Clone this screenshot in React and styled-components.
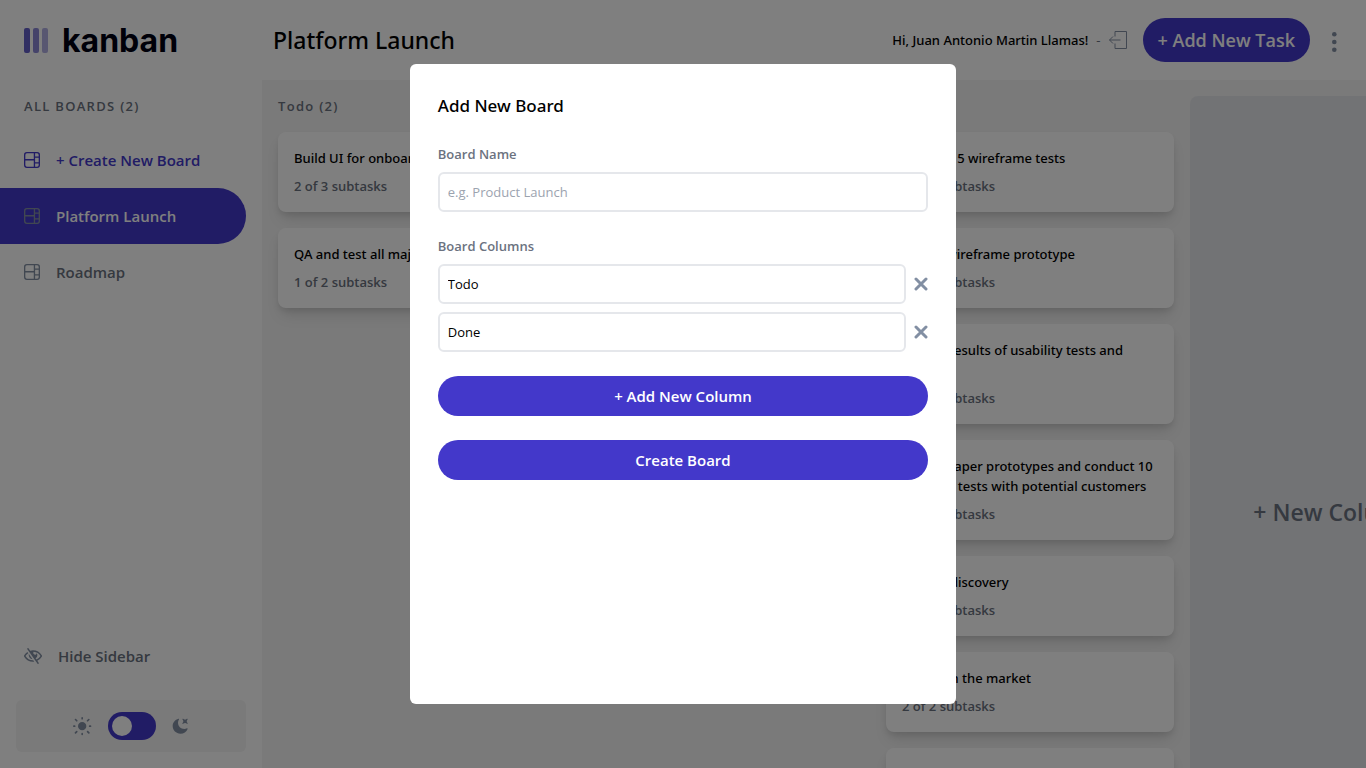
import React from "react";
import styled, { createGlobalStyle, css } from "styled-components";

const GlobalStyle = createGlobalStyle`
  *, *::before, *::after { box-sizing: border-box; }
  body {
    margin: 0;
    overflow: hidden;
    background: #ffffff;
    color: #000000;
    font-family: "Open Sans", "Noto Sans", sans-serif;
    font-size: 15px;
    font-weight: 600;
  }
  h1, h2, h3, p, ul { margin: 0; padding: 0; font-size: inherit; font-weight: inherit; }
  ul { list-style: none; }
  button, input { font: inherit; color: inherit; }
  button { border: 0; background: none; padding: 0; cursor: pointer; }
  svg { display: block; flex: none; }
`;

const gray = "#6b7280";
const slate = "#828fa3";
const indigo = "#4338ca";
const canvas = "#f4f4f4";

const mediumText = css`
  font-family: "Noto Sans", sans-serif;
  font-weight: 500;
`;

const Page = styled.div`
  display: flex;
  height: 100vh;
  overflow: hidden;
`;

const Sidebar = styled.aside`
  display: flex;
  flex-direction: column;
  flex: none;
  width: 262px;
  padding-bottom: 16px;
`;

const Brand = styled.div`
  display: flex;
  align-items: center;
  gap: 14px;
  height: 80px;
  padding-left: 24px;
  font-family: Inter, sans-serif;
  font-size: 32px;
  font-weight: 700;
  color: #000112;
`;

const SectionLabel = styled.h2`
  padding: 16px 24px;
  font-size: 13px;
  line-height: 20px;
  letter-spacing: 0.1em;
  color: ${gray};
`;

const NavItem = styled.button`
  display: flex;
  align-items: center;
  gap: 16px;
  width: 246px;
  height: 56px;
  padding-left: 24px;
  border-radius: 0 28px 28px 0;
  background: ${(p) => (p.$active ? indigo : "transparent")};
  color: ${(p) => (p.$active ? "#ffffff" : p.$accent ? indigo : gray)};
  svg { color: ${(p) => (p.$accent ? indigo : slate)}; }
`;

const Spacer = styled.div`
  flex: 1;
`;

const ThemePanel = styled.div`
  display: flex;
  align-items: center;
  justify-content: center;
  gap: 16px;
  height: 52px;
  margin: 16px 16px 0;
  border-radius: 6px;
  background: ${canvas};
  color: ${slate};
`;

const Toggle = styled.input`
  appearance: none;
  display: flex;
  align-items: center;
  width: 48px;
  height: 28px;
  margin: 0;
  padding: 4px;
  border-radius: 14px;
  background: ${indigo};
  &::before {
    content: "";
    width: 20px;
    height: 20px;
    border-radius: 50%;
    background: #ffffff;
  }
`;

const Main = styled.div`
  display: flex;
  flex-direction: column;
  flex: 1;
  min-width: 0;
`;

const Header = styled.header`
  display: flex;
  align-items: center;
  flex: none;
  height: 80px;
  padding: 0 29px 0 11px;
`;

const BoardTitle = styled.h1`
  ${mediumText}
  flex: 1;
  font-size: 23px;
  line-height: 32px;
`;

const Greeting = styled.p`
  ${mediumText}
  font-size: 13px;
  line-height: 20px;
`;

const Dash = styled.span`
  margin: 0 8px;
  font-weight: 400;
  color: ${gray};
`;

const IconButton = styled.button`
  display: flex;
  align-items: center;
  justify-content: center;
  color: ${slate};
`;

const MenuButton = styled(IconButton)`
  padding-top: 4px;
`;

const AddTask = styled.button`
  height: 44px;
  margin: 0 22px 0 16px;
  padding: 0 15px;
  border-radius: 22px;
  background: ${indigo};
  color: #ffffff;
  font-size: 18px;
`;

const Board = styled.main`
  display: flex;
  align-items: flex-start;
  flex: 1;
  min-height: 0;
  overflow: hidden;
  background: ${canvas};
`;

const Columns = styled.div`
  display: flex;
  gap: 16px;
  padding: 16px;
`;

const Column = styled.section`
  flex: none;
  width: 288px;
  padding-bottom: 100px;
`;

const ColumnTitle = styled.h2`
  margin-bottom: 16px;
  font-size: 13px;
  line-height: 20px;
  letter-spacing: 0.1em;
  color: ${gray};
`;

const CardList = styled.ul`
  display: flex;
  flex-direction: column;
  gap: 16px;
`;

const Card = styled.li`
  display: flex;
  flex-direction: column;
  gap: 8px;
  padding: 16px;
  border-radius: 8px;
  background: #ffffff;
  box-shadow: 0 4px 6px -1px rgba(0, 0, 0, 0.1), 0 10px 15px -3px rgba(0, 0, 0, 0.1);
  font-size: 13px;
  line-height: 20px;
  p { color: ${gray}; }
`;

const TaskTitle = styled.h3`
  ${mediumText}
`;

const NewColumn = styled.button`
  flex: none;
  width: 288px;
  border-radius: 8px;
  background: #e5e7eb;
  color: ${gray};
  font-size: 23px;
`;

const Overlay = styled.div`
  position: fixed;
  inset: 0;
  display: flex;
  justify-content: center;
  padding: 64px 0;
  background: rgba(0, 0, 0, 0.5);
`;

const Modal = styled.form`
  display: flex;
  flex-direction: column;
  gap: 24px;
  width: 40%;
  padding: 28px;
  border-radius: 6px;
  background: #ffffff;
`;

const ModalTitle = styled.h2`
  ${mediumText}
  font-size: 17px;
  line-height: 28px;
`;

const Field = styled.div`
  display: flex;
  flex-direction: column;
  gap: 8px;
`;

const Label = styled.label`
  font-size: 13px;
  line-height: 20px;
  color: ${gray};
`;

const InputRow = styled.div`
  display: flex;
  align-items: center;
  gap: 8px;
`;

const TextInput = styled.input`
  flex: 1;
  width: 100%;
  min-width: 0;
  min-height: 40px;
  padding: 0 8px;
  border: 2px solid #e5e7eb;
  border-radius: 6px;
  background: #ffffff;
  font-size: 13px;
  font-weight: 400;
  &::placeholder { color: #9ca3af; opacity: 1; }
`;

const PillButton = styled.button`
  height: 40px;
  border-radius: 20px;
  background: ${indigo};
  color: #ffffff;
`;

const LogoMark = () => (
  <svg width="24" height="25" viewBox="0 0 24 25" fill="#635fc7" aria-hidden="true">
    <rect width="6" height="25" rx="2" />
    <rect x="9" width="6" height="25" rx="2" opacity="0.75" />
    <rect x="18" width="6" height="25" rx="2" opacity="0.5" />
  </svg>
);

const BoardIcon = () => (
  <svg width="16" height="16" viewBox="0 0 16 16" fill="currentColor" aria-hidden="true">
    <path d="M0 2.889A2.889 2.889 0 0 1 2.889 0H13.11A2.889 2.889 0 0 1 16 2.889V13.11A2.888 2.888 0 0 1 13.111 16H2.89A2.889 2.889 0 0 1 0 13.111V2.89Zm1.333 5.555v4.667c0 .859.697 1.556 1.556 1.556h6.889V8.444H1.333Zm8.445-1.333V1.333h-6.89A1.556 1.556 0 0 0 1.334 2.89V7.11h8.445Zm4.889-1.333H11.11v4.444h3.556V5.778Zm0 5.778H11.11v3.11h2a1.556 1.556 0 0 0 1.556-1.555v-1.555Zm0-7.112V2.89a1.555 1.555 0 0 0-1.556-1.556h-2v3.111h3.556Z" />
  </svg>
);

const HideIcon = () => (
  <svg width="18" height="16" viewBox="0 0 18 16" fill="currentColor" aria-hidden="true">
    <path d="M8.522 11.223a4.252 4.252 0 0 1-3.654-5.22l3.654 5.22ZM9 12.25A8.685 8.685 0 0 1 1.5 8a8.612 8.612 0 0 1 2.76-2.864l-.86-1.23A10.112 10.112 0 0 0 .208 7.238a1.5 1.5 0 0 0 0 1.524A10.187 10.187 0 0 0 9 13.75c.414 0 .828-.025 1.239-.074l-1-1.43A8.88 8.88 0 0 1 9 12.25Zm8.792-3.488a10.14 10.14 0 0 1-4.486 4.046l1.504 2.148a.375.375 0 0 1-.092.523l-.648.453a.375.375 0 0 1-.523-.092L3.19 1.044A.375.375 0 0 1 3.282.52L3.93.068a.375.375 0 0 1 .523.092l1.735 2.479A10.308 10.308 0 0 1 9 2.25c3.746 0 7.031 2 8.792 4.988a1.5 1.5 0 0 1 0 1.524ZM16.5 8a8.674 8.674 0 0 0-6.755-4.219A1.75 1.75 0 1 0 12.75 5v-.001a4.25 4.25 0 0 1-1.154 5.366l.834 1.192A8.641 8.641 0 0 0 16.5 8Z" />
  </svg>
);

const SunIcon = () => (
  <svg width="19" height="19" viewBox="0 0 19 19" fill="currentColor" aria-hidden="true">
    <path d="M9.167 15.833a.833.833 0 0 1 .833.834v.833a.833.833 0 0 1-1.667 0v-.833a.833.833 0 0 1 .834-.834ZM3.75 13.75a.833.833 0 0 1 .59 1.422l-1.25 1.25a.833.833 0 0 1-1.18-1.178l1.25-1.25a.833.833 0 0 1 .59-.244Zm10.833 0c.221 0 .433.088.59.244l1.25 1.25a.833.833 0 0 1-1.179 1.178l-1.25-1.25a.833.833 0 0 1 .59-1.422ZM9.167 5a4.167 4.167 0 1 1 0 8.334 4.167 4.167 0 0 1 0-8.334Zm-7.5 3.333a.833.833 0 0 1 0 1.667H.833a.833.833 0 1 1 0-1.667h.834Zm15.833 0a.833.833 0 0 1 0 1.667h-.833a.833.833 0 0 1 0-1.667h.833Zm-1.667-6.666a.833.833 0 0 1 .59 1.422l-1.25 1.25a.833.833 0 1 1-1.179-1.178l1.25-1.25a.833.833 0 0 1 .59-.244Zm-13.333 0c.221 0 .433.088.59.244l1.25 1.25a.833.833 0 0 1-1.18 1.178L1.91 3.09a.833.833 0 0 1 .59-1.422ZM9.167 0A.833.833 0 0 1 10 .833v.834a.833.833 0 1 1-1.667 0V.833A.833.833 0 0 1 9.167 0Z" />
  </svg>
);

const MoonIcon = () => (
  <svg width="17" height="16" viewBox="0 0 17 16" fill="currentColor" aria-hidden="true">
    <path d="M6.474.682c.434-.11.718.406.481.78A6.067 6.067 0 0 0 6.01 4.72c0 3.418 2.827 6.187 6.314 6.187.89.002 1.77-.182 2.584-.54.408-.18.894.165.724.57-1.16 2.775-3.944 4.73-7.194 4.73-4.292 0-7.771-3.41-7.771-7.615 0-3.541 2.466-6.518 5.807-7.37Zm8.433.07c.442-.294.969.232.674.674l-.525.787a1.943 1.943 0 0 0 0 2.157l.525.788c.295.441-.232.968-.674.673l-.787-.525a1.943 1.943 0 0 0-2.157 0l-.786.525c-.442.295-.97-.232-.675-.673l.525-.788a1.943 1.943 0 0 0 0-2.157l-.525-.787c-.295-.442.232-.968.674-.673l.787.525a1.943 1.943 0 0 0 2.157 0l.787-.525Z" />
  </svg>
);

const LogoutIcon = () => (
  <svg width="18" height="18" viewBox="0 0 18 18" fill="none" stroke="currentColor" aria-hidden="true">
    <path d="M6 5.500V.5h11.500v17H6v-5M11.500 9H.5M4 5.500.5 9 4 12.500" />
  </svg>
);

const DotsIcon = () => (
  <svg width="5" height="20" viewBox="0 0 5 20" fill="currentColor" aria-hidden="true">
    <circle cx="2.308" cy="2.308" r="2.308" />
    <circle cx="2.308" cy="10" r="2.308" />
    <circle cx="2.308" cy="17.692" r="2.308" />
  </svg>
);

const CrossIcon = () => (
  <svg width="14" height="14" viewBox="0 0 14 14" fill="none" stroke="currentColor" strokeWidth="3" strokeLinecap="round" aria-hidden="true">
    <path d="m2 2 10 10M12 2 2 12" />
  </svg>
);

const columns = [
  {
    name: "Todo",
    tasks: [
      ["Build UI for onboarding flow", "2 of 3 subtasks"],
      ["QA and test all major user journeys", "1 of 2 subtasks"],
    ],
  },
  { name: "Doing", tasks: [["Design settings and search pages", "1 of 3 subtasks"]] },
  {
    name: "Done",
    tasks: [
      ["Conduct 5 wireframe tests", "1 of 1 subtasks"],
      ["Create wireframe prototype", "1 of 1 subtasks"],
      ["Review results of usability tests and iterate", "3 of 3 subtasks"],
      ["Create paper prototypes and conduct 10 usability tests with potential customers", "2 of 2 subtasks"],
      ["Market discovery", "1 of 1 subtasks"],
      ["Research the market", "2 of 2 subtasks"],
      ["Competitor analysis", "2 of 2 subtasks"],
    ],
  },
];

export default function App() {
  return (
    <>
      <GlobalStyle />
      <Page>
        <Sidebar>
          <Brand>
            <LogoMark />
            kanban
          </Brand>
          <SectionLabel>ALL BOARDS (2)</SectionLabel>
          <nav>
            <NavItem $accent><BoardIcon />+ Create New Board</NavItem>
            <NavItem $active><BoardIcon />Platform Launch</NavItem>
            <NavItem><BoardIcon />Roadmap</NavItem>
          </nav>
          <Spacer />
          <NavItem><HideIcon />Hide Sidebar</NavItem>
          <ThemePanel>
            <SunIcon />
            <Toggle type="checkbox" role="switch" aria-label="Dark theme" />
            <MoonIcon />
          </ThemePanel>
        </Sidebar>
        <Main>
          <Header>
            <BoardTitle>Platform Launch</BoardTitle>
            <Greeting>
              Hi, Juan Antonio Martin Llamas!
              <Dash>-</Dash>
            </Greeting>
            <IconButton aria-label="Log out"><LogoutIcon /></IconButton>
            <AddTask>+ Add New Task</AddTask>
            <MenuButton aria-label="Board options"><DotsIcon /></MenuButton>
          </Header>
          <Board>
            <Columns>
              {columns.map((column) => (
                <Column key={column.name}>
                  <ColumnTitle>{`${column.name} (${column.tasks.length})`}</ColumnTitle>
                  <CardList>
                    {column.tasks.map(([title, progress]) => (
                      <Card key={title}>
                        <TaskTitle>{title}</TaskTitle>
                        <p>{progress}</p>
                      </Card>
                    ))}
                  </CardList>
                </Column>
              ))}
              <NewColumn>+ New Column</NewColumn>
            </Columns>
          </Board>
        </Main>
      </Page>
      <Overlay>
        <Modal role="dialog" aria-labelledby="dialog-title">
          <ModalTitle id="dialog-title">Add New Board</ModalTitle>
          <Field>
            <Label htmlFor="board-name">Board Name</Label>
            <TextInput id="board-name" placeholder="e.g. Product Launch" />
          </Field>
          <Field>
            <Label htmlFor="column-0">Board Columns</Label>
            {["Todo", "Done"].map((name, i) => (
              <InputRow key={name}>
                <TextInput id={`column-${i}`} aria-label={`Column ${i + 1}`} defaultValue={name} />
                <IconButton type="button" aria-label={`Remove ${name}`}><CrossIcon /></IconButton>
              </InputRow>
            ))}
          </Field>
          <PillButton type="button">+ Add New Column</PillButton>
          <PillButton type="submit">Create Board</PillButton>
        </Modal>
      </Overlay>
    </>
  );
}
